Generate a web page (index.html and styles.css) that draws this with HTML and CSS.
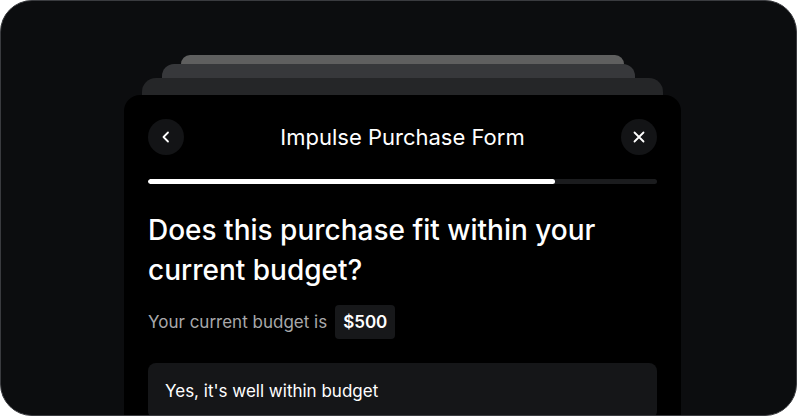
FILE: index.html
```html
<!DOCTYPE html>
<html lang="en">
  <head>
    <meta charset="UTF-8" />
    <meta name="viewport" content="width=device-width, initial-scale=1.0" />
    <title>Impulse Purchase Form</title>
    <link rel="stylesheet" href="styles.css">
  </head>
  <body>
    <div class="frame">
      <div class="stack">
        <div class="sheet sheet-back"></div>
        <div class="sheet sheet-middle"></div>
        <div class="sheet sheet-front"></div>

        <div class="card">
          <div class="card-header">
            <button class="icon-button" aria-label="Back">
              <svg width="16" height="16" viewBox="0 0 16 16" fill="none">
                <path d="M10 3.5 L5.5 8 L10 12.5" stroke="#ffffff" stroke-width="1.8" stroke-linecap="round" stroke-linejoin="round" />
              </svg>
            </button>
            <h1>Impulse Purchase Form</h1>
            <button class="icon-button" aria-label="Close">
              <svg width="16" height="16" viewBox="0 0 16 16" fill="none">
                <path d="M3.5 3.5 L12.5 12.5 M12.5 3.5 L3.5 12.5" stroke="#ffffff" stroke-width="1.8" stroke-linecap="round" />
              </svg>
            </button>
          </div>

          <div class="progress">
            <div class="progress-fill" style="width: 80%"></div>
          </div>

          <h2 class="question">Does this purchase fit within your current budget?</h2>

          <div class="budget">
            <span>Your current budget is</span>
            <span class="budget-amount">$500</span>
          </div>

          <div class="option">Yes, it's well within budget</div>
        </div>
      </div>
    </div>
  </body>
</html>
```

FILE: styles.css
```css
body {
  font-family: "Inter", "Noto Sans", sans-serif;
  background-color: #ffffff;
  margin: 0;
  padding: 0;
}

.frame {
  box-sizing: border-box;
  width: 797px;
  height: 416px;
  background: #0c0d0f;
  border: 1px solid #3a3b3f;
  border-radius: 32px;
  overflow: hidden;
  padding-top: 54px;
}

.stack {
  width: 557px;
  margin-left: 123px;
  display: flex;
  flex-direction: column;
}

.sheet {
  border-radius: 12px 12px 0 0;
}

.sheet-back {
  width: 443px;
  height: 9px;
  margin-left: 57px;
  background: #5f5f5f;
  border-radius: 10px 10px 0 0;
}

.sheet-middle {
  width: 473px;
  height: 14px;
  margin-left: 38px;
  background: #37383b;
}

.sheet-front {
  width: 521px;
  height: 17px;
  margin-left: 18px;
  background: #252628;
  border-radius: 14px 14px 0 0;
}

.card {
  background: #000000;
  border-radius: 16px 16px 0 0;
  padding: 24px 24px 0;
  height: 400px;
}

.card-header {
  display: flex;
  align-items: center;
  justify-content: space-between;
  height: 36px;
}

.card-header h1 {
  margin: 0;
  color: #ffffff;
  font-size: 22px;
  font-weight: 400;
}

.icon-button {
  width: 36px;
  height: 36px;
  border-radius: 50%;
  border: none;
  padding: 0;
  background: #131416;
  display: flex;
  align-items: center;
  justify-content: center;
}

.progress {
  margin-top: 24px;
  height: 5px;
  border-radius: 3px;
  background: #1b1c1e;
  overflow: hidden;
}

.progress-fill {
  height: 100%;
  background: #ffffff;
  border-radius: 3px;
}

.question {
  margin: 26px 0 0;
  color: #ffffff;
  font-size: 28px;
  font-weight: 500;
  line-height: 40px;
}

.budget {
  margin-top: 15px;
  display: flex;
  align-items: center;
  gap: 8px;
  font-size: 17px;
  color: #a8a8aa;
}

.budget-amount {
  background: #17181a;
  color: #ffffff;
  font-weight: 600;
  height: 34px;
  line-height: 34px;
  padding: 0 8px;
  border-radius: 4px;
}

.option {
  margin-top: 24px;
  background: #151618;
  border-radius: 8px;
  padding: 16px 17px;
  color: #ffffff;
  font-size: 17px;
  line-height: 24px;
}
```
